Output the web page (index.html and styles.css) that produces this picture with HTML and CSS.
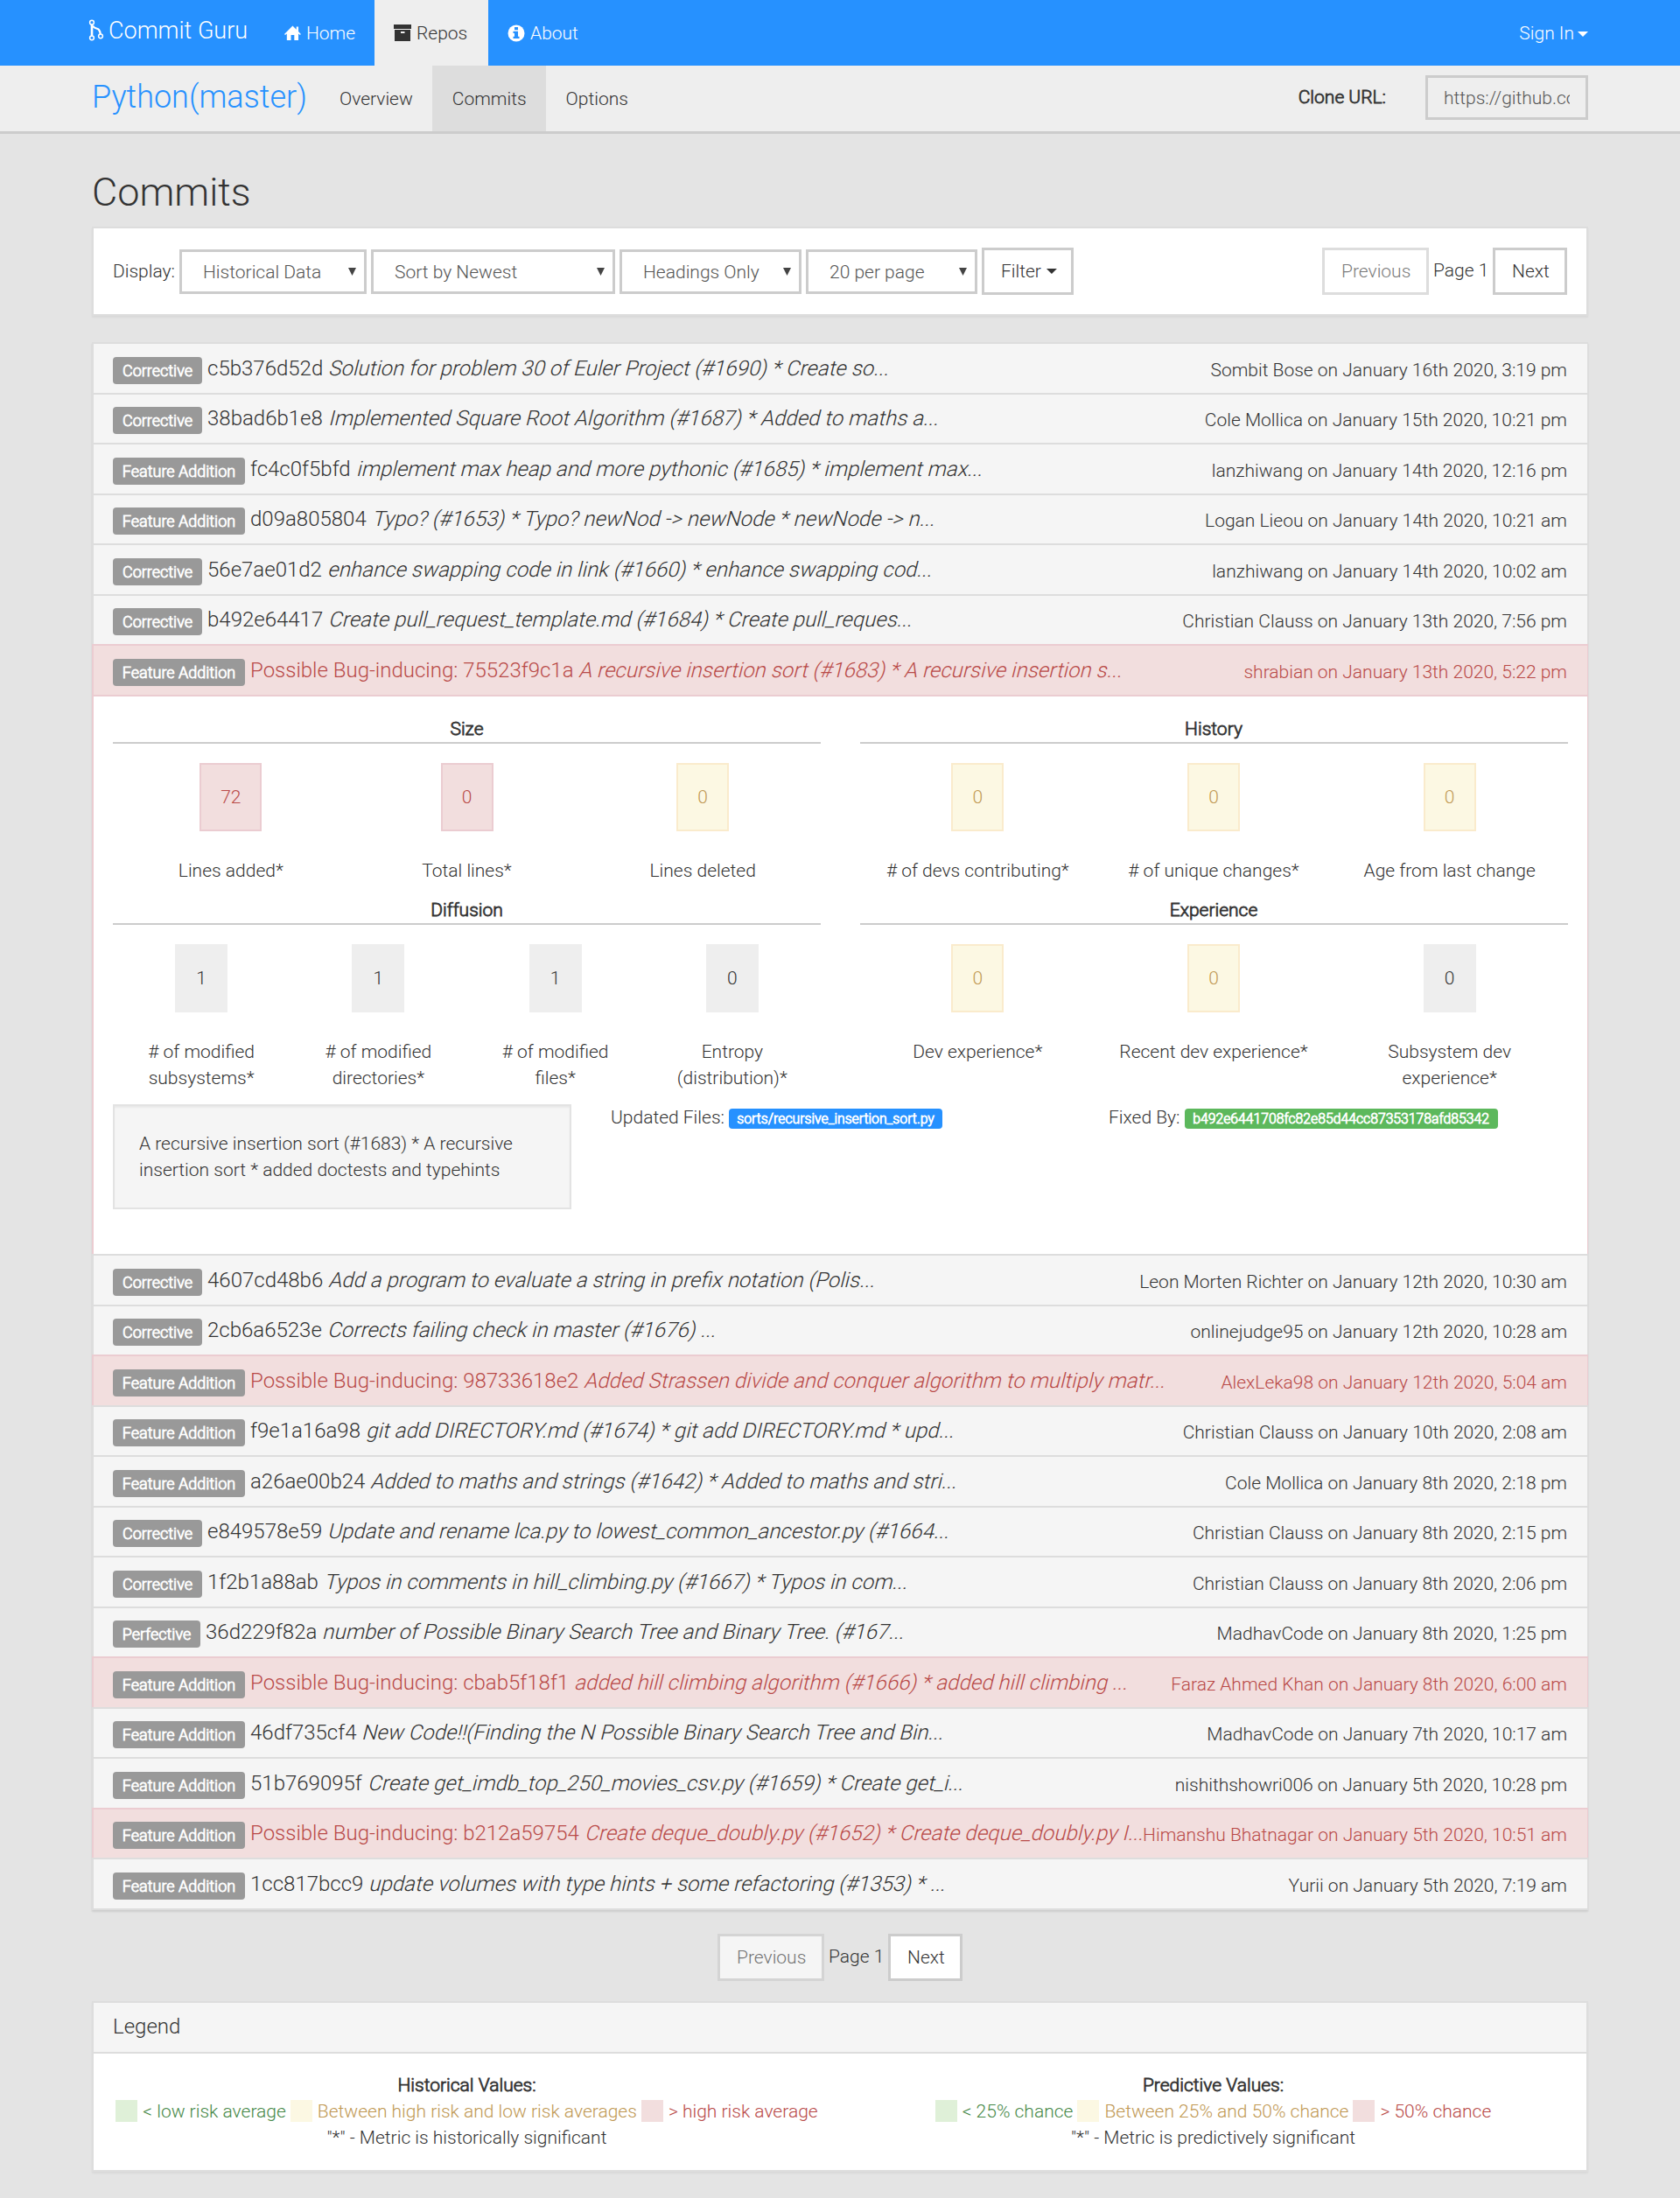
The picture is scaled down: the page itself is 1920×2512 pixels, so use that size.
FILE: index.html
```html
<!DOCTYPE html>
<html lang="en">
<head>
<meta charset="utf-8">
<title>Commit Guru</title>
<link rel="stylesheet" href="styles.css">
</head>
<body>
<header class="topbar">
  <div class="container topbar-inner">
    <a class="brand"><svg class="i-fork" viewBox="0 0 18 25"><g fill="none" stroke="#fff" stroke-width="1.500"><circle cx="4" cy="3.700" r="2.400"/><circle cx="4" cy="21.300" r="2.400"/><circle cx="14" cy="19.300" r="2.400"/></g><path d="M4 6v13" stroke="#fff" stroke-width="2.600"/><path d="M5 7.500c1.500 3.500 5.500 2.500 7 4.500 1 1.300 1.500 2.500 1.800 5" fill="none" stroke="#fff" stroke-width="2.200"/></svg><span>Commit Guru</span></a>
    <a class="nav-item home"><svg class="icon" viewBox="0 0 20 20"><path fill="#fff" d="M10 1 0 11l1 1 2-1.500V18.500h5V12h4v6.500h5v-8l2 1.500 1-1-3-3V2h-2.500v3.500z"/></svg><span>Home</span></a>
    <a class="nav-item active"><svg class="icon" viewBox="0 0 20 20"><path fill="#333" d="M0 0h20v5H0zM1 6h18v13H1zM8 8v2h4.500V8z" fill-rule="evenodd"/></svg><span>Repos</span></a>
    <a class="nav-item"><svg class="icon" viewBox="0 0 20 20"><circle cx="10" cy="10" r="9.500" fill="#fff"/><path fill="#2691ff" d="M8 3h4v3.200H8zM6.500 7.800H12v6h1.500V16h-7v-2.200H8V10H6.500z"/></svg><span>About</span></a>
    <a class="signin"><span>Sign In</span><i class="caret"></i></a>
  </div>
</header>
<nav class="subbar">
  <div class="container subbar-inner">
    <a class="repo">Python(master)</a>
    <a class="tab">Overview</a>
    <a class="tab active">Commits</a>
    <a class="tab">Options</a>
    <span class="clone-label strong">Clone URL:</span>
    <span class="clone-input"><span>https://github.com</span></span>
  </div>
</nav>
<main class="container">
  <h1>Commits</h1>
  <section class="toolbar">
    <span class="display">Display:</span>
    <span class="select s1">Historical Data<i></i></span>
    <span class="select s2">Sort by Newest<i></i></span>
    <span class="select s3">Headings Only<i></i></span>
    <span class="select s4">20 per page<i></i></span>
    <span class="btn filter">Filter<i class="caret"></i></span>
    <span class="pager"><span class="btn disabled">Previous</span><span class="page">Page 1</span><span class="btn next">Next</span></span>
  </section>
  <section class="list">
    <div class="row"><b class="tag c">Corrective</b><p>c5b376d52d <em>Solution for problem 30 of Euler Project (#1690) * Create so...</em></p><time>Sombit Bose on January 16th 2020, 3:19 pm</time></div>
    <div class="row"><b class="tag c">Corrective</b><p>38bad6b1e8 <em>Implemented Square Root Algorithm (#1687) * Added to maths a...</em></p><time>Cole Mollica on January 15th 2020, 10:21 pm</time></div>
    <div class="row"><b class="tag f">Feature Addition</b><p>fc4c0f5bfd <em>implement max heap and more pythonic (#1685) * implement max...</em></p><time>lanzhiwang on January 14th 2020, 12:16 pm</time></div>
    <div class="row"><b class="tag f">Feature Addition</b><p>d09a805804 <em>Typo? (#1653) * Typo? newNod -&gt; newNode * newNode -&gt; n...</em></p><time>Logan Lieou on January 14th 2020, 10:21 am</time></div>
    <div class="row"><b class="tag c">Corrective</b><p>56e7ae01d2 <em>enhance swapping code in link (#1660) * enhance swapping cod...</em></p><time>lanzhiwang on January 14th 2020, 10:02 am</time></div>
    <div class="row"><b class="tag c">Corrective</b><p>b492e64417 <em>Create pull_request_template.md (#1684) * Create pull_reques...</em></p><time>Christian Clauss on January 13th 2020, 7:56 pm</time></div>
    <div class="row bug"><b class="tag f">Feature Addition</b><p>Possible Bug-inducing: 75523f9c1a <em>A recursive insertion sort (#1683) * A recursive insertion s...</em></p><time>shrabian on January 13th 2020, 5:22 pm</time></div>
    <div class="detail">
      <div class="groups">
        <div class="group"><h2 class="strong">Size</h2><div class="metrics">
          <div class="metric"><span class="box red wide">72</span><p>Lines added*</p></div>
          <div class="metric"><span class="box red">0</span><p>Total lines*</p></div>
          <div class="metric"><span class="box yellow">0</span><p>Lines deleted</p></div></div></div>
        <div class="group"><h2 class="strong">History</h2><div class="metrics">
          <div class="metric"><span class="box yellow">0</span><p># of devs contributing*</p></div>
          <div class="metric"><span class="box yellow">0</span><p># of unique changes*</p></div>
          <div class="metric"><span class="box yellow">0</span><p>Age from last change</p></div></div></div>
        <div class="group"><h2 class="strong">Diffusion</h2><div class="metrics">
          <div class="metric"><span class="box">1</span><p># of modified<br>subsystems*</p></div>
          <div class="metric"><span class="box">1</span><p># of modified<br>directories*</p></div>
          <div class="metric"><span class="box">1</span><p># of modified<br>files*</p></div>
          <div class="metric"><span class="box">0</span><p>Entropy<br>(distribution)*</p></div></div></div>
        <div class="group"><h2 class="strong">Experience</h2><div class="metrics">
          <div class="metric"><span class="box yellow">0</span><p>Dev experience*</p></div>
          <div class="metric"><span class="box yellow">0</span><p>Recent dev experience*</p></div>
          <div class="metric"><span class="box">0</span><p>Subsystem dev<br>experience*</p></div></div></div>
      </div>
      <div class="extra">
        <div class="well">A recursive insertion sort (#1683) * A recursive<br>insertion sort * added doctests and typehints</div>
        <div class="ref">Updated Files: <b class="chip blue">sorts/recursive_insertion_sort.py</b></div>
        <div class="ref">Fixed By: <b class="chip green">b492e6441708fc82e85d44cc87353178afd85342</b></div>
      </div>
    </div>
    <div class="row"><b class="tag c">Corrective</b><p>4607cd48b6 <em>Add a program to evaluate a string in prefix notation (Polis...</em></p><time>Leon Morten Richter on January 12th 2020, 10:30 am</time></div>
    <div class="row"><b class="tag c">Corrective</b><p>2cb6a6523e <em>Corrects failing check in master (#1676) ...</em></p><time>onlinejudge95 on January 12th 2020, 10:28 am</time></div>
    <div class="row bug"><b class="tag f">Feature Addition</b><p>Possible Bug-inducing: 98733618e2 <em>Added Strassen divide and conquer algorithm to multiply matr...</em></p><time>AlexLeka98 on January 12th 2020, 5:04 am</time></div>
    <div class="row"><b class="tag f">Feature Addition</b><p>f9e1a16a98 <em>git add DIRECTORY.md (#1674) * git add DIRECTORY.md * upd...</em></p><time>Christian Clauss on January 10th 2020, 2:08 am</time></div>
    <div class="row"><b class="tag f">Feature Addition</b><p>a26ae00b24 <em>Added to maths and strings (#1642) * Added to maths and stri...</em></p><time>Cole Mollica on January 8th 2020, 2:18 pm</time></div>
    <div class="row"><b class="tag c">Corrective</b><p>e849578e59 <em>Update and rename lca.py to lowest_common_ancestor.py (#1664...</em></p><time>Christian Clauss on January 8th 2020, 2:15 pm</time></div>
    <div class="row"><b class="tag c">Corrective</b><p>1f2b1a88ab <em>Typos in comments in hill_climbing.py (#1667) * Typos in com...</em></p><time>Christian Clauss on January 8th 2020, 2:06 pm</time></div>
    <div class="row"><b class="tag p">Perfective</b><p>36d229f82a <em>number of Possible Binary Search Tree and Binary Tree. (#167...</em></p><time>MadhavCode on January 8th 2020, 1:25 pm</time></div>
    <div class="row bug"><b class="tag f">Feature Addition</b><p>Possible Bug-inducing: cbab5f18f1 <em>added hill climbing algorithm (#1666) * added hill climbing ...</em></p><time>Faraz Ahmed Khan on January 8th 2020, 6:00 am</time></div>
    <div class="row"><b class="tag f">Feature Addition</b><p>46df735cf4 <em>New Code!!(Finding the N Possible Binary Search Tree and Bin...</em></p><time>MadhavCode on January 7th 2020, 10:17 am</time></div>
    <div class="row"><b class="tag f">Feature Addition</b><p>51b769095f <em>Create get_imdb_top_250_movies_csv.py (#1659) * Create get_i...</em></p><time>nishithshowri006 on January 5th 2020, 10:28 pm</time></div>
    <div class="row bug"><b class="tag f">Feature Addition</b><p>Possible Bug-inducing: b212a59754 <em>Create deque_doubly.py (#1652) * Create deque_doubly.py I...</em></p><time>Himanshu Bhatnagar on January 5th 2020, 10:51 am</time></div>
    <div class="row"><b class="tag f">Feature Addition</b><p>1cc817bcc9 <em>update volumes with type hints + some refactoring (#1353) * ...</em></p><time>Yurii on January 5th 2020, 7:19 am</time></div>
  </section>
  <div class="pager bottom"><span class="btn disabled">Previous</span><span class="page">Page 1</span><span class="btn next">Next</span></div>
  <section class="legend">
    <h3>Legend</h3>
    <div class="legend-body">
      <div class="legend-col"><span class="strong">Historical Values:</span>
        <div class="keys"><span class="key low">&lt; low risk average</span><span class="key mid">Between high risk and low risk averages</span><span class="key high">&gt; high risk average</span></div>
        <span>"*" - Metric is historically significant</span></div>
      <div class="legend-col"><span class="strong">Predictive Values:</span>
        <div class="keys"><span class="key low">&lt; 25% chance</span><span class="key mid">Between 25% and 50% chance</span><span class="key high">&gt; 50% chance</span></div>
        <span>"*" - Metric is predictively significant</span></div>
    </div>
  </section>
</main>
</body>
</html>
```
FILE: styles.css
```css
* { box-sizing: border-box; }
body {
  margin: 0;
  min-height: 2512px;
  background: #e4e4e4;
  color: #333;
  font: 300 21px/30px Roboto, sans-serif;
  white-space: nowrap;
}
h1, h2, h3, p { margin: 0; font-weight: 300; }
.container { width: 1710px; margin: 0 auto; }
.strong { font-weight: 300; -webkit-text-stroke: 0.8px; }

.caret {
  flex: none;
  width: 12px;
  height: 6px;
  background: currentColor;
  clip-path: polygon(0 0, 100% 0, 50% 100%);
}

.topbar { height: 75px; background: #2691ff; color: #fff; }
.topbar-inner { display: flex; height: 75px; }
.brand { display: flex; align-items: flex-start; width: 200px; margin-left: -4px; font-size: 27px; }
.i-fork { width: 18px; height: 25px; margin: 22px 5px 0 0; }
.brand span { margin-top: 20px; }
.nav-item { display: flex; gap: 6px; padding: 23px 22px 0; }
.nav-item.home { padding-left: 24px; width: 127px; }
.nav-item.active { width: 130px; background: #eee; color: #333; }
.icon { width: 20px; height: 20px; margin-top: 5px; }
.signin { display: flex; gap: 4px; margin-left: auto; padding-top: 23px; }
.signin .caret { margin-top: 13px; }

.subbar { height: 78px; background: #eee; border-bottom: 3px solid #ccc; }
.subbar-inner { display: flex; height: 75px; line-height: 76px; }
.repo { width: 260.5px; color: #2691ff; font-size: 36px; line-height: 72px; }
.tab { height: 75px; padding: 0 22.5px; }
.tab.active { background: #ddd; }
.clone-label { margin-left: auto; margin-right: 45px; line-height: 73px; }
.clone-input {
  width: 186px;
  height: 51px;
  margin-top: 11px;
  padding: 0 18px;
  border: 3px solid #ccc;
  color: #555;
  line-height: 46px;
}
.clone-input span { display: block; overflow: hidden; }

h1 { padding-top: 42px; height: 106px; font-size: 45px; line-height: 50px; }

.toolbar {
  display: flex;
  gap: 5px;
  height: 102px;
  padding: 22px 22px 0;
  background: #fff;
  border: 2px solid #ddd;
  box-shadow: 0 2px 2px rgba(0,0,0,.05);
}
.display { width: 71px; line-height: 54px; }
.select {
  display: flex;
  justify-content: space-between;
  height: 51px;
  margin-top: 2px;
  padding: 0 9px 0 24px;
  border: 3px solid #ccc;
  color: #555;
  line-height: 47px;
}
.select i {
  width: 9px;
  height: 9px;
  margin-top: 18px;
  background: #444;
  clip-path: polygon(0 0, 100% 0, 50% 100%);
}
.s1 { width: 214px; }
.s2 { width: 279px; }
.s3 { width: 208px; }
.s4 { width: 196px; }
.btn {
  height: 54px;
  padding: 0 19px;
  border: 3px solid #ccc;
  background: #fff;
  line-height: 48px;
  text-align: center;
}
.filter { display: flex; align-items: center; gap: 6px; width: 105px; }
.disabled { width: 122px; opacity: .65; }
.next { width: 85px; }
.pager { display: flex; margin-left: auto; }
.page { width: 73px; padding-left: 5px; line-height: 52px; }

.list { margin-top: 30px; border-bottom: 2px solid #ddd; box-shadow: 0 2px 2px rgba(0,0,0,.1); }
.row {
  display: flex;
  align-items: flex-start;
  height: 57.5px;
  padding: 0 23px 0 22px;
  background: #f5f5f5;
  border: solid #ddd;
  border-width: 2px 1px 0 2px;
}
.row p { margin: 12.5px 0 0 6px; font-size: 24px; }
.row em {
  display: inline-block;
  font-style: normal;
  transform: skewX(-14deg);
  transform-origin: 0 23px;
}
.row time { margin: 14.600px 0 0 auto; }
.bug { background: #f2dede; border-color: #ebccd1; color: #b94a48; }
.tag {
  height: 31px;
  margin-top: 14.600px;
  border-radius: 4px;
  background: #999;
  color: #fff;
  font-size: 18px;
  font-weight: 300;
  -webkit-text-stroke: 0.8px;
  line-height: 31px;
  text-align: center;
}
.c { width: 102px; }
.f { width: 151px; }
.p { width: 100px; }

.detail {
  height: 639.500px;
  padding: 22px;
  background: #fff;
  border: solid #ebccd1;
  border-width: 2px 1px 0 2px;
}
.groups { display: grid; grid-template-columns: 809px 809px; column-gap: 44.5px; }
.group { height: 207px; }
.group h2 { height: 32px; border-bottom: 2px solid #ccc; font-size: 21px; line-height: 30px; text-align: center; }
.metrics { display: flex; padding-top: 22.400px; }
.metric { flex: 1; display: flex; flex-direction: column; align-items: center; text-align: center; }
.metric p { margin-top: 30px; }
.box { width: 60px; height: 78px; background: #eee; line-height: 78px; text-align: center; }
.wide { width: 71px; }
.red { background: #f2dede; color: #b94a48; border: 2px solid #ebccd1; line-height: 74px; }
.yellow { background: #fcf8e3; color: #c09853; border: 2px solid #faebcc; line-height: 74px; }
.extra { display: flex; margin-top: 30.400px; }
.well {
  flex: none;
  width: 524px;
  height: 120px;
  margin: 0 45px 0 0;
  padding: 28px;
  background: #f5f5f5;
  border: 2px solid #e3e3e3;
  box-shadow: inset 0 2px 2px rgba(0,0,0,.05);
}
.ref { flex: none; width: 569px; }
.ref + .ref { width: 524px; }
.chip {
  display: inline-block;
  height: 23px;
  border-radius: 4px;
  color: #fff;
  font-size: 15.750px;
  font-weight: 300;
  -webkit-text-stroke: 0.8px;
  line-height: 23px;
  text-align: center;
}
.blue { width: 244px; background: #2691ff; }
.green { width: 358px; background: #5cb85c; }

.bottom { justify-content: center; margin: 27.400px 0 23px; }

.legend { height: 195px; background: #fff; border: 2px solid #ddd; box-shadow: 0 2px 2px rgba(0,0,0,.05); }
.legend h3 { height: 58px; padding: 12px 22px; border-bottom: 2px solid #ddd; background: #f5f5f5; font-size: 24px; line-height: 30px; }
.legend-body { display: grid; grid-template-columns: 1fr 1fr; padding-top: 21px; }
.legend-col { display: flex; flex-direction: column; align-items: center; }
.keys { display: flex; gap: 5px; }
.key { display: flex; gap: 6px; }
.key::before { content: ""; width: 25px; height: 25px; margin-top: 2px; background: #dff0d8; }
.low { color: #468847; }
.mid { color: #c09853; }
.high { color: #b94a48; }
.mid::before { background: #fcf8e3; }
.high::before { background: #f2dede; }
```
